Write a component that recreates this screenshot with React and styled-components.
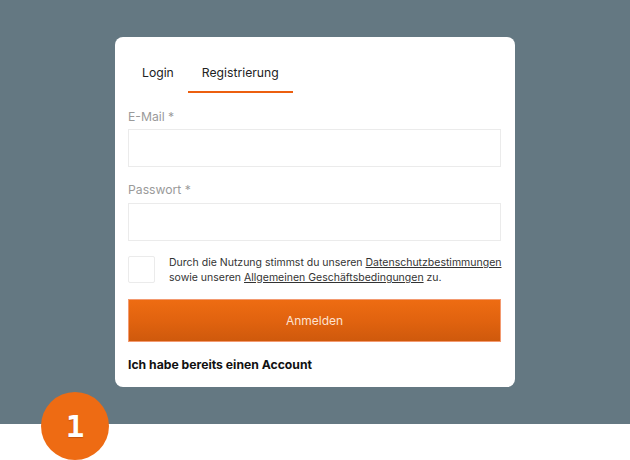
import React from "react";
import styled, { createGlobalStyle } from "styled-components";

const Global = createGlobalStyle`
  html, body { margin: 0; padding: 0; background: #ffffff; }
  body { font-family: Inter, "Noto Sans", sans-serif; color: #222; }
  * { box-sizing: border-box; }
`;

const Page = styled.div`
  position: relative;
  width: 630px;
  height: 460px;
  overflow: hidden;
  background: #ffffff;
`;

const Stage = styled.div`
  height: 424px;
  background: #647882;
  display: flex;
  justify-content: center;
  align-items: flex-start;
  padding-top: 37px;
`;

const Card = styled.div`
  width: 400px;
  background: #ffffff;
  border-radius: 8px;
  padding: 14px 14px 14px 13px;
  display: flex;
  flex-direction: column;
  & > * { flex: none; }
`;

const Tabs = styled.div`
  display: flex;
  height: 42px;
`;

const Tab = styled.div`
  padding: 0 14px;
  display: flex;
  align-items: center;
  padding-top: 2px;
  font-size: 12.2px;
  color: #222;
  border-bottom: 2px solid ${(p) => (p.$active ? "#ec5f0f" : "transparent")};
`;

const Label = styled.div`
  margin-top: ${(p) => p.$top}px;
  font-size: 12.2px;
  line-height: 16px;
  color: #9a9a9a;
`;

const Input = styled.div`
  margin-top: ${(p) => p.$top}px;
  height: 38px;
  width: 373px;
  border: 1px solid #ebebeb;
  background: #fff;
`;

const ConsentRow = styled.div`
  margin-top: 14px;
  display: flex;
  align-items: flex-start;
  gap: 14px;
`;

const Box = styled.div`
  margin-top: 1px;
  width: 27px;
  height: 27px;
  flex: none;
  border: 1px solid #ebebeb;
  border-radius: 2px;
`;

const Consent = styled.div`
  font-size: 10.5px;
  line-height: 15px;
  color: #333;
  white-space: nowrap;
`;

const Link = styled.span`
  text-decoration: underline;
  text-underline-offset: 1px;
`;

const Button = styled.div`
  margin-top: 14px;
  width: 373px;
  height: 43px;
  display: flex;
  align-items: center;
  justify-content: center;
  background: linear-gradient(180deg, #ee6c12 0%, #e1630f 50%, #cf590c 100%);
  border: 1px solid #f39a70;
  font-size: 12px;
  color: #fde2d2;
`;

const Account = styled.div`
  margin-top: 15px;
  font-size: 12.2px;
  line-height: 16px;
  font-weight: 700;
  color: #111;
`;

const Badge = styled.div`
  position: absolute;
  left: 41px;
  top: 392px;
  width: 68px;
  height: 68px;
  border-radius: 50%;
  background: #ee6b13;
  display: flex;
  align-items: center;
  justify-content: center;
  font-family: "DejaVu Sans Mono", monospace;
  font-weight: 700;
  font-size: 31px;
  color: #ffffff;
  text-shadow: 0 1px 1px rgba(120, 40, 0, 0.35);
`;

export default function App() {
  return (
    <Page>
      <Global />
      <Stage>
        <Card>
          <Tabs>
            <Tab>Login</Tab>
            <Tab $active>Registrierung</Tab>
          </Tabs>
          <Label $top={16}>E-Mail *</Label>
          <Input $top={4} />
          <Label $top={15}>Passwort *</Label>
          <Input $top={5} />
          <ConsentRow>
            <Box />
            <Consent>
              Durch die Nutzung stimmst du unseren <Link>Datenschutzbestimmungen</Link>
              <br />
              sowie unseren <Link>Allgemeinen Geschäftsbedingungen</Link> zu.
            </Consent>
          </ConsentRow>
          <Button>Anmelden</Button>
          <Account>Ich habe bereits einen Account</Account>
        </Card>
      </Stage>
      <Badge>1</Badge>
    </Page>
  );
}
